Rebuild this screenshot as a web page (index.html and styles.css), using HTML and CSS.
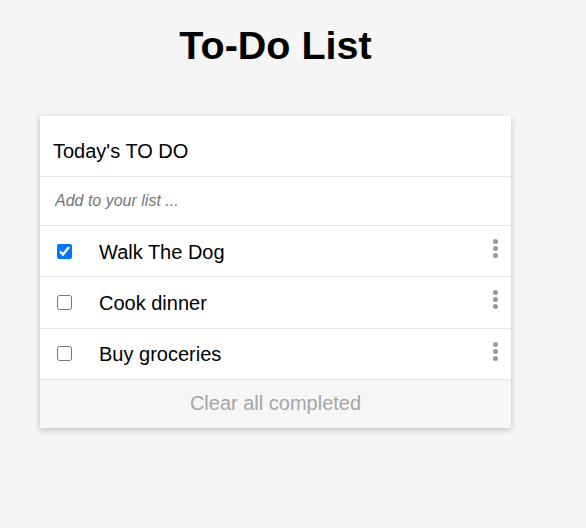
FILE: index.html
```html
<!DOCTYPE html>
<html>
<head>
<meta charset="utf-8">
<link rel="stylesheet" href="styles.css">
</head>
<body>
<div class="wrap">
  <h1 class="title">To-Do List</h1>
  <div class="card">
    <div class="card-head">Today's TO DO</div>
    <div class="add-row">
      <input class="add-input" type="text" placeholder="Add to your list ...">
    </div>
    <ul class="list">
      <li class="item">
        <input class="check" type="checkbox" checked>
        <span class="label">Walk The Dog</span>
        <span class="menu"><i></i><i></i><i></i></span>
      </li>
      <li class="item">
        <input class="check" type="checkbox">
        <span class="label">Cook dinner</span>
        <span class="menu"><i></i><i></i><i></i></span>
      </li>
      <li class="item">
        <input class="check" type="checkbox">
        <span class="label">Buy groceries</span>
        <span class="menu"><i></i><i></i><i></i></span>
      </li>
    </ul>
    <div class="card-foot">Clear all completed</div>
  </div>
</div>
</body>
</html>
```
FILE: styles.css
```css
html, body {
  margin: 0;
  padding: 0;
  background: #f5f5f5;
  font-family: "Liberation Sans", Arial, sans-serif;
  color: #000;
}
body {
  padding: 8px;
}
.wrap {
  width: 471px;
  margin-left: 32px;
}
.title {
  margin: 15px 0 48px;
  font-size: 39.5px;
  font-weight: bold;
  text-align: center;
  line-height: 45px;
}
.card {
  background: #fff;
  box-shadow: 0 2px 6px rgba(0, 0, 0, 0.22);
}
.card-head {
  font-size: 20px;
  line-height: 23px;
  padding: 24px 13px 13px;
  border-bottom: 1px solid #e8e8e8;
}
.add-row {
  height: 48px;
  display: flex;
  align-items: center;
  border-bottom: 1px solid #e8e8e8;
}
.add-input {
  border: none;
  outline: none;
  background: transparent;
  width: 100%;
  padding: 0 15px;
  margin: 0;
  font-family: "Liberation Sans", Arial, sans-serif;
  font-size: 16px;
  font-style: italic;
  color: #333;
}
.add-input::placeholder {
  color: #757575;
  font-style: italic;
}
.list {
  list-style: none;
  margin: 0;
  padding: 0;
}
.item {
  height: 50.3px;
  display: flex;
  align-items: center;
  border-bottom: 1px solid #e8e8e8;
  padding: 0 13px 0 17px;
}
.check {
  width: 15px;
  height: 15px;
  margin: 0 27px 0 0;
}
.label {
  flex: 1;
  font-size: 20px;
  line-height: 23px;
  padding-top: 2px;
}
.menu {
  display: flex;
  flex-direction: column;
  gap: 2px;
  margin-bottom: 5px;
}
.menu i {
  display: block;
  width: 5px;
  height: 5px;
  border-radius: 50%;
  background: #999;
}
.card-foot {
  height: 48px;
  display: flex;
  align-items: center;
  justify-content: center;
  background: #f7f5f5;
  color: #a6a6a6;
  font-size: 20px;
}
```
